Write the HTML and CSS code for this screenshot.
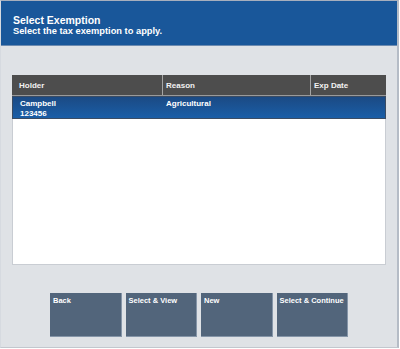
FILE: index.html
```html
<!DOCTYPE html>
<html>
<head>
<meta charset="utf-8">
<link rel="stylesheet" href="styles.css">
</head>
<body>
<div class="frame">
  <header class="title-bar">
    <div class="title">Select Exemption</div>
    <div class="subtitle">Select the tax exemption to apply.</div>
  </header>
  <main class="content">
    <div class="list">
      <div class="list-head">
        <div class="col col-holder">Holder</div>
        <div class="col col-reason">Reason</div>
        <div class="col col-exp">Exp Date</div>
      </div>
      <div class="row selected">
        <div class="col col-holder">Campbell<br>123456</div>
        <div class="col col-reason">Agricultural</div>
        <div class="col col-exp"></div>
      </div>
    </div>
    <div class="actions">
      <button class="btn">Back</button>
      <button class="btn">Select &amp; View</button>
      <button class="btn">New</button>
      <button class="btn">Select &amp; Continue</button>
    </div>
  </main>
</div>
</body>
</html>
```

FILE: styles.css
```css
* { box-sizing: border-box; }
html, body { margin: 0; padding: 0; }
body {
  width: 400px;
  height: 349px;
  font-family: "Liberation Sans", Arial, sans-serif;
  background: #ffffff;
}
.frame {
  width: 399px;
  height: 348px;
  background: #dfe2e6;
  border-top: 1px solid #a7afbd;
  border-right: 2px solid #b5bcc6;
  border-bottom: 1px solid #c2c7ce;
  border-left: 1px solid #d6dae0;
  display: flex;
  flex-direction: column;
}
.title-bar {
  height: 45px;
  background: #19579a;
  color: #ffffff;
  font-weight: bold;
  padding: 13px 0 0 12px;
  border-bottom: 1px solid #6d8bb0;
}
.title { font-size: 10.5px; line-height: 12px; }
.subtitle { font-size: 9.3px; line-height: 11px; }
.content {
  padding: 29px 12px 0 11px;
  display: flex;
  flex-direction: column;
}
.list {
  width: 374px;
  height: 190px;
  background: #ffffff;
  border: 1px solid #c9cdd3;
  border-top: none;
}
.list-head {
  display: flex;
  height: 21px;
  background: #4d4d4d;
  color: #f2f2f2;
  font-size: 8px;
  font-weight: bold;
  border-bottom: 1px solid #9a9a9a;
  margin: 0 -1px;
}
.list-head .col {
  padding: 6px 0 0 7px;
  border-right: 1px solid #a5a5a5;
}
.list-head .col-reason, .list-head .col-exp { padding-left: 3px; }
.list-head .col:last-child { border-right: none; }
.col-holder { width: 151px; }
.col-reason { width: 148px; }
.col-exp { flex: 1; }
.row {
  display: flex;
  height: 23px;
  font-size: 8px;
  font-weight: bold;
  color: #ffffff;
  line-height: 10px;
}
.row.selected {
  background: linear-gradient(#1b4a84, #1a5ea7);
  border: 1px solid #3b4c63;
  margin: 0 -1px;
}
.row .col { padding: 2px 0 0 7px; }
.row .col-reason { padding-left: 2px; }
.actions {
  display: flex;
  gap: 4px;
  margin-top: 28px;
  padding-left: 38px;
}
.btn {
  width: 71.5px;
  height: 44px;
  background: #52657b;
  border: none;
  border-right: 1px solid #8595a8;
  border-bottom: 1px solid #8595a8;
  color: #ffffff;
  font-family: "Liberation Sans", Arial, sans-serif;
  font-size: 7.5px;
  font-weight: bold;
  text-align: left;
  display: flex;
  align-items: flex-start;
  padding: 3px 3px;
}
```
